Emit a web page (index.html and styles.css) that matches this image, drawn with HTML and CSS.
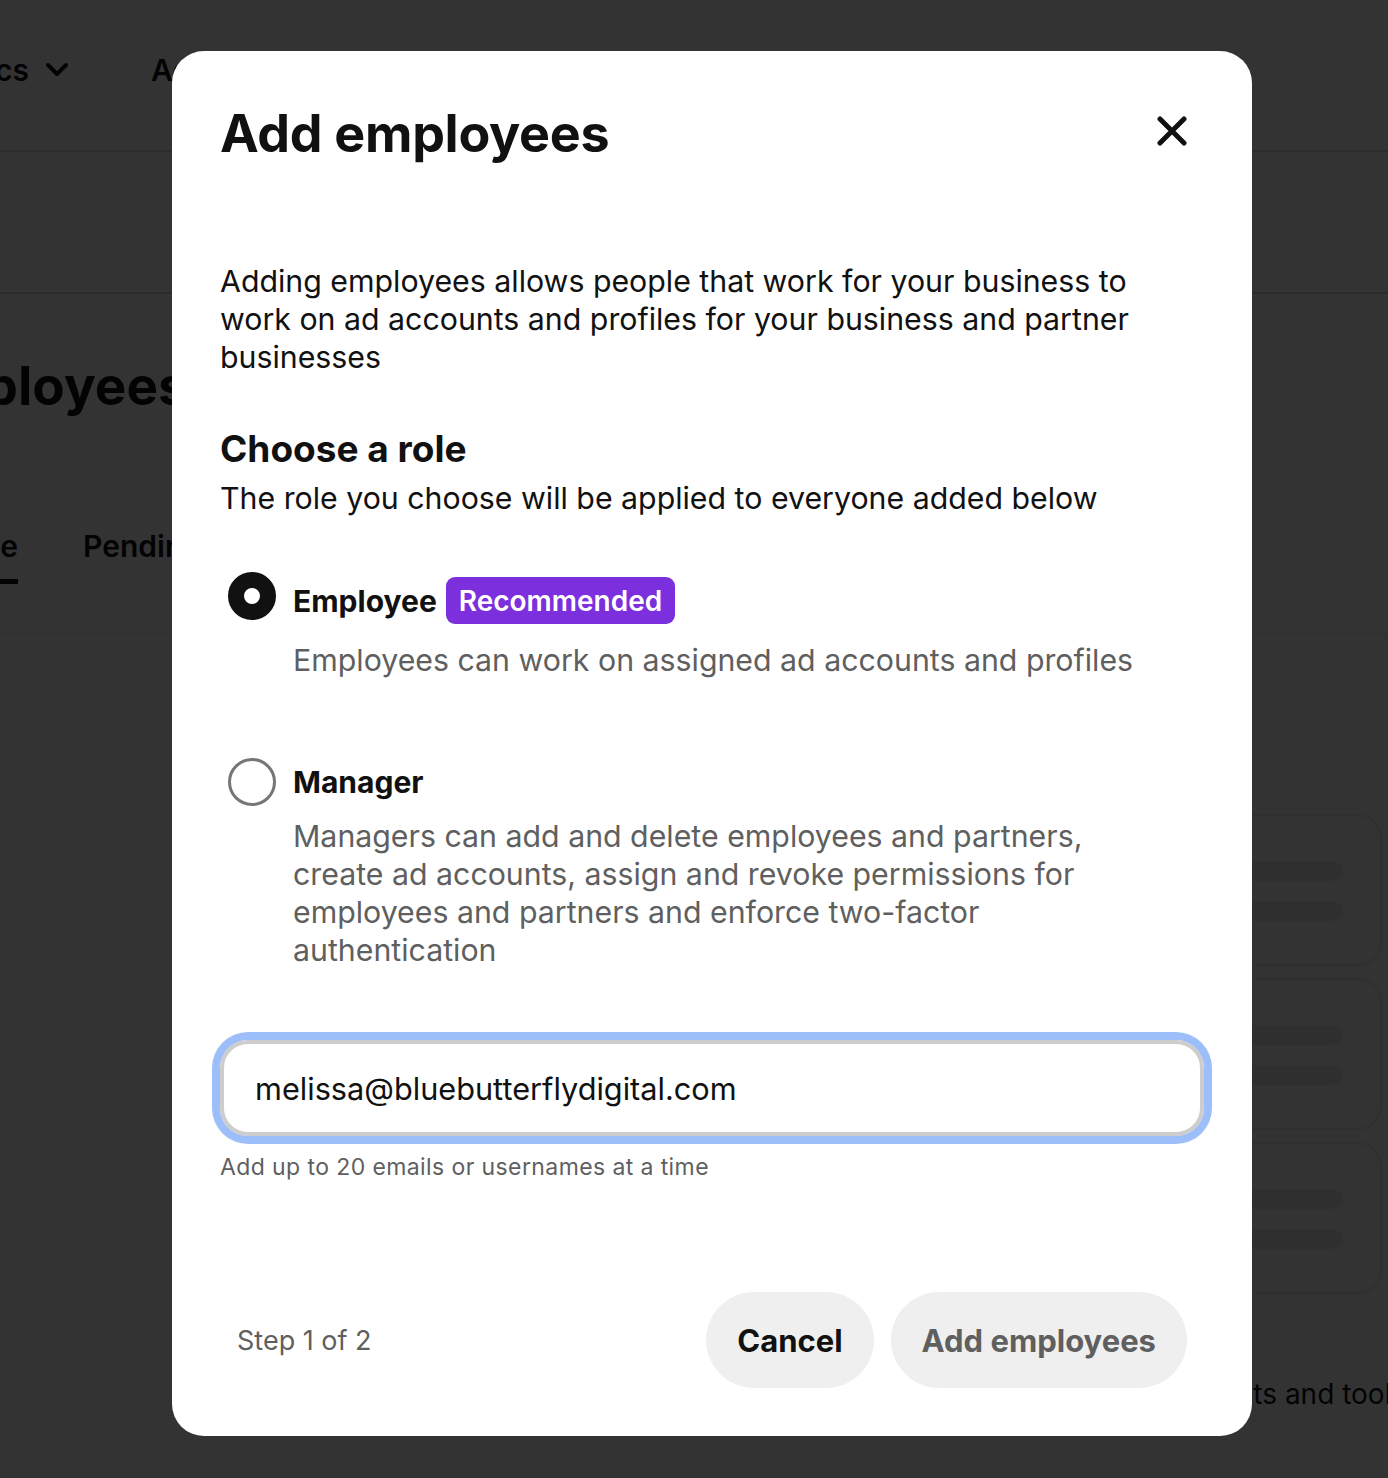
FILE: index.html
```html
<!DOCTYPE html>
<html lang="en">
<head>
<meta charset="utf-8">
<title>Add employees</title>
<link rel="stylesheet" href="styles.css">
</head>
<body>
<div class="page">
  <header class="topnav">
    <div class="navitem navitem--first">Analytics
      <svg class="chev" viewBox="0 0 24 16" width="24" height="16"><polyline points="3,3 12,12 21,3" fill="none" stroke="#111" stroke-width="4" stroke-linecap="round" stroke-linejoin="round"/></svg>
    </div>
    <div class="navitem">Ads
      <svg class="chev" viewBox="0 0 24 16" width="24" height="16"><polyline points="3,3 12,12 21,3" fill="none" stroke="#111" stroke-width="4" stroke-linecap="round" stroke-linejoin="round"/></svg>
    </div>
  </header>
  <div class="subbar"></div>
  <main class="content">
    <h1 class="page-title">Employees</h1>
    <nav class="tabs">
      <span class="tab tab--active">Active</span>
      <span class="tab">Pending</span>
    </nav>
    <div class="tabline"></div>
    <div class="columns">
      <div class="col-main"></div>
      <aside class="col-side">
        <div class="card"><span class="bar"></span><span class="bar"></span></div>
        <div class="card"><span class="bar"></span><span class="bar"></span></div>
        <div class="card"><span class="bar"></span><span class="bar"></span></div>
        <p class="side-link">Insights and tools</p>
      </aside>
    </div>
  </main>
</div>

<div class="backdrop"></div>

<div class="modal" role="dialog" aria-labelledby="modal-title">
  <div class="modal-header">
    <h2 id="modal-title" class="modal-title">Add employees</h2>
    <button class="close-btn" aria-label="Close">
      <svg viewBox="0 0 30 30" width="30" height="30"><path d="M3 3 L27 27 M27 3 L3 27" stroke="#111" stroke-width="5" stroke-linecap="round" fill="none"/></svg>
    </button>
  </div>

  <p class="intro">Adding employees allows people that work for your business to work on ad accounts and profiles for your business and partner businesses</p>

  <h3 class="section-title">Choose a role</h3>
  <p class="section-sub">The role you choose will be applied to everyone added below</p>

  <div class="options">
    <div class="option option--employee">
      <div class="radio-col"><span class="radio radio--checked"></span></div>
      <div class="option-body">
        <div class="option-title option-title--badge">
          <span class="option-label">Employee</span>
          <span class="badge">Recommended</span>
        </div>
        <p class="option-desc option-desc--employee">Employees can work on assigned ad accounts and profiles</p>
      </div>
    </div>
    <div class="option option--manager">
      <div class="radio-col"><span class="radio"></span></div>
      <div class="option-body">
        <div class="option-title">
          <span class="option-label">Manager</span>
        </div>
        <p class="option-desc option-desc--manager">Managers can add and delete employees and partners, create ad accounts, assign and revoke permissions for employees and partners and enforce two-factor authentication</p>
      </div>
    </div>
  </div>

  <div class="field">
    <div class="input">melissa@bluebutterflydigital.com</div>
    <p class="helper">Add up to 20 emails or usernames at a time</p>
  </div>

  <div class="modal-footer">
    <span class="step">Step 1 of 2</span>
    <div class="actions">
      <button class="btn btn--cancel">Cancel</button>
      <button class="btn btn--disabled">Add employees</button>
    </div>
  </div>
</div>
</body>
</html>
```

FILE: styles.css
```css
* { box-sizing: border-box; }

html, body {
  margin: 0;
  padding: 0;
  width: 1388px;
  height: 1478px;
  overflow: hidden;
  background: #ffffff;
  font-family: Inter, "Noto Sans", "Liberation Sans", sans-serif;
  color: #111111;
}

/* ---------- background page ---------- */
.page {
  width: 1388px;
  height: 1478px;
  display: flex;
  flex-direction: column;
  overflow: hidden;
}

.topnav {
  height: 152px;
  flex: none;
  display: flex;
  align-items: center;
  gap: 82px;
  padding-bottom: 10px;
  border-bottom: 2px solid #dcdcdc;
  font-size: 30px;
  font-weight: 600;
  white-space: nowrap;
}

.navitem {
  display: flex;
  align-items: center;
  gap: 16px;
}

.navitem--first { margin-left: -107px; }

.chev { display: block; }

.subbar {
  height: 142px;
  flex: none;
  border-bottom: 2px solid #dcdcdc;
}

.content {
  flex: 1;
  display: flex;
  flex-direction: column;
}

.page-title {
  margin: 60px 0 0 -96px;
  font-size: 53px;
  line-height: 64px;
  font-weight: 700;
  white-space: nowrap;
}

.tabs {
  display: flex;
  gap: 65px;
  margin: 108px 0 0 -74px;
  font-size: 30px;
  font-weight: 600;
  line-height: 40px;
  white-space: nowrap;
}

.tab {
  padding-bottom: 13px;
  border-bottom: 5px solid transparent;
}

.tab--active { border-bottom-color: #111; }

.tabline {
  height: 2px;
  margin-top: 48px;
  background: #f4f4f4;
}

.columns {
  flex: 1;
  display: flex;
}

.col-main { flex: 1; }

.col-side {
  width: 560px;
  margin-right: 6px;
  padding-top: 180px;
  display: flex;
  flex-direction: column;
  gap: 12px;
}

.card {
  height: 152px;
  border: 2px solid #ececec;
  border-radius: 24px;
  padding: 45px 37px 0 40px;
  display: flex;
  flex-direction: column;
  gap: 20px;
}

.bar {
  display: block;
  height: 20px;
  border-radius: 10px;
  background: #e8e8e8;
}

.side-link {
  margin: 70px 0 0 352px;
  font-size: 28px;
  line-height: 36px;
  white-space: nowrap;
  color: #111;
}

/* ---------- overlay ---------- */
.backdrop {
  position: fixed;
  inset: 0;
  background: rgba(0, 0, 0, 0.8);
}

.modal {
  position: fixed;
  left: 172px;
  top: 51px;
  width: 1080px;
  height: 1385px;
  background: #ffffff;
  border-radius: 32px;
  padding: 48px;
  display: flex;
  flex-direction: column;
  color: #111111;
}

.modal-header {
  height: 64px;
  display: flex;
  align-items: center;
  justify-content: space-between;
}

.modal-title {
  margin: 0;
  padding-top: 5px;
  font-size: 52px;
  line-height: 64px;
  font-weight: 700;
  letter-spacing: -0.3px;
}

.close-btn {
  width: 64px;
  height: 64px;
  border: 0;
  padding: 0;
  background: transparent;
  border-radius: 50%;
  display: flex;
  align-items: center;
  justify-content: center;
}

.close-btn svg { display: block; }

.intro {
  margin: 99px 0 0 0;
  max-width: 940px;
  font-size: 30.3px;
  line-height: 38px;
}

.section-title {
  margin: 50px 0 0 0;
  font-size: 37px;
  line-height: 46px;
  font-weight: 700;
}

.section-sub {
  margin: 7px 0 0 0;
  font-size: 30.3px;
  line-height: 38px;
}

.options {
  margin-top: 55px;
  display: flex;
  flex-direction: column;
  gap: 79px;
}

.option {
  display: flex;
}

.radio-col {
  width: 64px;
  flex: none;
  display: flex;
  justify-content: center;
}

.radio {
  width: 48px;
  height: 48px;
  border-radius: 50%;
  border: 3px solid #767676;
  background: #fff;
}

.radio--checked {
  border: 16px solid #111111;
}

.option-body {
  padding-left: 9px;
  flex: 1;
}

.option-title {
  min-height: 48px;
  display: flex;
  align-items: center;
  gap: 9px;
}

.option-title--badge {
  margin-top: 5px;
  min-height: 47px;
}

.option-label {
  font-size: 30px;
  line-height: 38px;
  font-weight: 700;
}

.badge {
  height: 47px;
  padding: 0 13px;
  border-radius: 9px;
  background: #7b2fdd;
  color: #ffffff;
  font-size: 28px;
  font-weight: 600;
  display: flex;
  align-items: center;
}

.option-desc {
  margin: 0;
  max-width: 867px;
  font-size: 30.3px;
  line-height: 38px;
  color: #5f5f5f;
}

.option-desc--employee { margin-top: 17px; }
.option-desc--manager { margin-top: 11px; }

.field {
  margin-top: 71px;
}

.input {
  height: 96px;
  border: 4px solid #cdcdcd;
  border-radius: 28px;
  box-shadow: 0 0 0 8px #9cbffa;
  padding: 0 31px;
  display: flex;
  align-items: center;
  font-size: 30.7px;
  color: #111;
}

.helper {
  margin: 17px 0 0 0;
  font-size: 23px;
  line-height: 28px;
  color: #5f5f5f;
  letter-spacing: 0.4px;
}

.modal-footer {
  margin-top: auto;
  padding: 0 17px;
  display: flex;
  align-items: center;
  justify-content: space-between;
}

.step {
  font-size: 27px;
  color: #5f5f5f;
}

.actions {
  display: flex;
  gap: 17px;
}

.btn {
  height: 96px;
  padding: 0 31px;
  border: 0;
  border-radius: 48px;
  background: #efefef;
  font-family: inherit;
  font-size: 31px;
  font-weight: 700;
  color: #111;
}

.btn--disabled { color: #5f5f5f; }
```
